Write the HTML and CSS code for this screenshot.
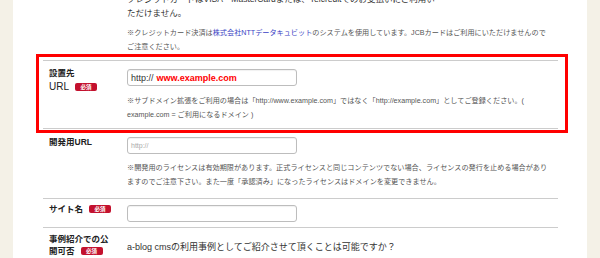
FILE: index.html
```html
<!DOCTYPE html>
<html lang="ja">
<head>
<meta charset="utf-8">
<link rel="stylesheet" href="styles.css">
</head>
<body>
<div class="panel">
  <div class="form">
    <div class="intro">
      <p class="lead">クレジットカードはVISA・MasterCardまたは、Telcreditでのお支払いにご利用い<br>ただけません。</p>
      <p class="note">※クレジットカード決済は<span class="link">株式会社NTTデータキュビット</span>のシステムを使用しています。JCBカードはご利用にいただけませんので<br>ご注意ください。</p>
    </div>

    <div class="highlight">
      <div class="row row-url">
        <div class="label">設置先<br><span class="reg">URL</span><span class="badge">必須</span></div>
        <div class="field">
          <div class="input"><span class="proto">http://</span><span class="domain">www.example.com</span></div>
          <p class="note">※サブドメイン拡張をご利用の場合は「http://www.example.com」ではなく「http://example.com」としてご登録ください。(<br>example.com = ご利用になるドメイン )</p>
        </div>
      </div>
    </div>

    <div class="row row-dev">
      <div class="label">開発用URL</div>
      <div class="field">
        <div class="input"><span class="placeholder">http://</span></div>
        <p class="note">※開発用のライセンスは有効期限があります。正式ライセンスと同じコンテンツでない場合、ライセンスの発行を止める場合があり<br>ますのでご注意下さい。また一度「承認済み」になったライセンスはドメインを変更できません。</p>
      </div>
    </div>

    <div class="row row-site">
      <div class="label">サイト名<span class="badge">必須</span></div>
      <div class="field">
        <div class="input"></div>
      </div>
    </div>

    <div class="row row-case">
      <div class="label">事例紹介での公<br>開可否<span class="badge">必須</span></div>
      <div class="field">
        <p class="question">a-blog cmsの利用事例としてご紹介させて頂くことは可能ですか？</p>
      </div>
    </div>
  </div>
</div>
</body>
</html>
```
FILE: styles.css
```css
* { box-sizing: border-box; }
html, body { margin: 0; padding: 0; }
body {
  background: #f4f1e7;
  font-family: "Liberation Sans", "Noto Sans CJK JP", sans-serif;
  color: #333;
  height: 258px;
  overflow: hidden;
}
.panel {
  margin-left: 13px;
  width: 574px;
  height: 258px;
  background: #fff;
  overflow: hidden;
}
.form {
  margin-left: 30px;
  width: 515px;
}
p { margin: 0; }
.intro {
  padding-left: 84px;
  margin-top: -8px;
}
.lead {
  font-size: 8.5px;
  line-height: 14px;
  color: #333;
  white-space: nowrap;
}
.note {
  font-size: 7.15px;
  line-height: 14px;
  color: #555;
  white-space: nowrap;
}
.intro .note { margin-top: 6px; }
.link { color: #3a3fc4; }

.highlight {
  margin: 0 -10px 0 -7px;
  border: 3px solid #f00;
  padding: 3px 7px 1px 4px;
}
.row {
  display: grid;
  grid-template-columns: 84px 1fr;
  border-bottom: 1px solid #ccc;
}
.row-url { border-top: 1px solid #ccc; padding: 5px 0 6px; }
.label {
  padding-left: 6px;
  width: 78px;
  font-size: 8.5px;
  line-height: 13px;
  font-weight: bold;
  color: #222;
  white-space: nowrap;
}
.label .reg { font-weight: normal; font-size: 10px; }
.badge {
  display: inline-block;
  vertical-align: middle;
  margin-left: 6px;
  width: 22px;
  height: 8px;
  line-height: 8px;
  border-radius: 2px;
  background: #c3112e;
  color: #fff;
  font-size: 5.5px;
  font-weight: bold;
  text-align: center;
  position: relative;
  top: -1px;
}
.input {
  width: 170px;
  height: 17px;
  border: 1px solid #bdbdbd;
  border-radius: 3px;
  box-shadow: inset 0 1px 1px rgba(0,0,0,0.06);
  padding-left: 3px;
  display: flex;
  align-items: center;
  gap: 3px;
}
.proto { font-size: 9px; color: #333; }
.domain { font-size: 9px; color: #f00; font-weight: bold; }
.placeholder { font-size: 7px; color: #aaa; }

.row-url .label { padding-top: 1px; }
.row-url .field { padding-top: 3px; }
.row-url .note { margin-top: 8px; }

.row-dev { padding: 3px 0 9px; }
.row-dev .field { padding-top: 1px; }
.row-dev .note { margin-top: 7px; }

.row-site { padding: 4px 0 5px; }
.row-site .field { padding-top: 2px; }

.row-case { border-bottom: none; padding-top: 5px; }
.row-case .label { line-height: 12px; }
.question {
  padding-top: 8px;
  font-size: 9px;
  line-height: 13px;
  color: #333;
  white-space: nowrap;
}
```
